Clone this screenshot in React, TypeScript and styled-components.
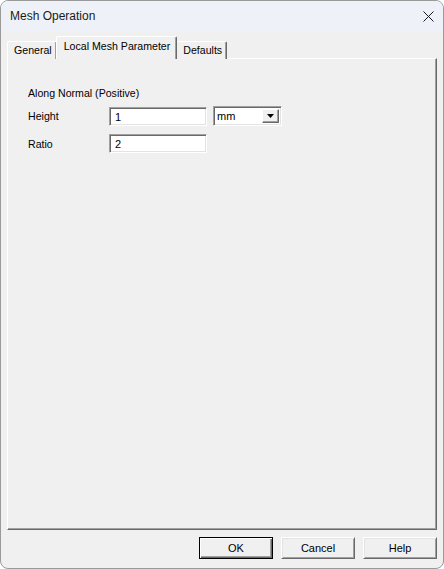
import React from "react";
import styled, { createGlobalStyle } from "styled-components";

const Global = createGlobalStyle`
  html, body { margin: 0; padding: 0; background: #ffffff; }
  * { box-sizing: border-box; }
`;

const Window = styled.div`
  width: 444px;
  height: 569px;
  border: 1px solid #9a9a9a;
  border-radius: 8px;
  overflow: hidden;
  display: flex;
  flex-direction: column;
  background: #f0f0f0;
  font-family: "Liberation Sans", Arial, sans-serif;
  color: #000;
`;

const TitleBar = styled.div`
  height: 30px;
  flex: none;
  display: flex;
  align-items: center;
  justify-content: space-between;
  padding-left: 9px;
  background: #eef2f8;
  font-size: 12px;
  color: #1a1a1a;
`;

const CloseBox = styled.div`
  width: 30px;
  height: 30px;
  display: flex;
  align-items: center;
  justify-content: center;
`;

const Body = styled.div`
  flex: 1;
  display: flex;
  flex-direction: column;
  padding: 6px 6px 8px 6px;
`;

const TabRow = styled.div`
  height: 22px;
  display: flex;
  align-items: flex-end;
  position: relative;
  z-index: 1;
  margin-bottom: -1px;
`;

const Tab = styled.div<{ $active?: boolean }>`
  height: ${(p) => (p.$active ? "23px" : "18px")};
  padding: ${(p) => (p.$active ? "3px 6px 0 7px" : "2px 4px 0 6px")};
  margin: ${(p) => (p.$active ? "0 -1px 0 -1px" : "0")};
  border-top: 1px solid #ffffff;
  border-left: 1px solid #ffffff;
  border-right: 1px solid #696969;
  box-shadow: inset -1px 0 0 #a0a0a0;
  border-radius: 2px 2px 0 0;
  background: #f0f0f0;
  font-size: 10.6px;
  white-space: nowrap;
  position: relative;
  z-index: ${(p) => (p.$active ? 2 : 1)};
`;

const Panel = styled.div`
  height: 472px;
  border-top: 1px solid #ffffff;
  border-left: 1px solid #ffffff;
  border-right: 1px solid #696969;
  border-bottom: 1px solid #696969;
  box-shadow: inset -1px -1px 0 #a0a0a0;
  padding: 27px 20px 0 20px;
  font-size: 10.6px;
`;

const Heading = styled.div`
  height: 14px;
  line-height: 14px;
  margin-bottom: 6px;
`;

const FormGrid = styled.div`
  display: grid;
  grid-template-columns: 81px 98px 75px;
  column-gap: 0;
  row-gap: 8px;
  align-items: center;
`;

const Label = styled.div`
  line-height: 14px;
`;

const Field = styled.div`
  height: 19px;
  background: #ffffff;
  border-top: 1px solid #a0a0a0;
  border-left: 1px solid #a0a0a0;
  border-right: 1px solid #ffffff;
  border-bottom: 1px solid #ffffff;
  box-shadow: inset 1px 1px 0 #696969, inset -1px -1px 0 #e3e3e3;
  padding: 2px 0 0 5px;
  line-height: 14px;
  font-size: 11px;
`;

const Select = styled(Field)`
  height: 20px;
  margin-left: 6px;
  display: flex;
  align-items: stretch;
  padding: 2px 2px 2px 3px;
`;

const SelectText = styled.div`
  flex: 1;
  line-height: 14px;
`;

const DropBtn = styled.div`
  width: 17px;
  background: #f0f0f0;
  border-top: 1px solid #ffffff;
  border-left: 1px solid #ffffff;
  border-right: 1px solid #696969;
  border-bottom: 1px solid #696969;
  box-shadow: inset -1px -1px 0 #a0a0a0;
  display: flex;
  align-items: center;
  justify-content: center;
`;

const ButtonRow = styled.div`
  display: flex;
  justify-content: flex-end;
  gap: 8px;
  margin-top: 7px;
`;

const Button = styled.div<{ $default?: boolean }>`
  width: 74px;
  height: 22px;
  display: flex;
  align-items: center;
  justify-content: center;
  background: #f0f0f0;
  font-size: 11px;
  border-top: 1px solid ${(p) => (p.$default ? "#000" : "#ffffff")};
  border-left: 1px solid ${(p) => (p.$default ? "#000" : "#ffffff")};
  border-right: 1px solid ${(p) => (p.$default ? "#000" : "#696969")};
  border-bottom: 1px solid ${(p) => (p.$default ? "#000" : "#696969")};
  box-shadow: ${(p) =>
    p.$default
      ? "inset 1px 1px 0 #ffffff, inset -1px -1px 0 #696969, inset -2px -2px 0 #a0a0a0"
      : "inset 1px 1px 0 #e3e3e3, inset -1px -1px 0 #a0a0a0"};
`;

export default function App() {
  return (
    <>
      <Global />
      <Window>
        <TitleBar>
          <span>Mesh Operation</span>
          <CloseBox>
            <svg width="11" height="11" viewBox="0 0 11 11">
              <path d="M0.5 0.5 L10.5 10.5 M10.5 0.5 L0.5 10.5" stroke="#1a1a1a" strokeWidth="1" fill="none" />
            </svg>
          </CloseBox>
        </TitleBar>
        <Body>
          <TabRow>
            <Tab>General</Tab>
            <Tab $active>Local Mesh Parameter</Tab>
            <Tab>Defaults</Tab>
          </TabRow>
          <Panel>
            <Heading>Along Normal (Positive)</Heading>
            <FormGrid>
              <Label>Height</Label>
              <Field>1</Field>
              <Select>
                <SelectText>mm</SelectText>
                <DropBtn>
                  <svg width="7" height="4" viewBox="0 0 7 4">
                    <path d="M0 0 H7 L3.5 4 Z" fill="#000" />
                  </svg>
                </DropBtn>
              </Select>
              <Label>Ratio</Label>
              <Field>2</Field>
              <div />
            </FormGrid>
          </Panel>
          <ButtonRow>
            <Button $default>OK</Button>
            <Button>Cancel</Button>
            <Button>Help</Button>
          </ButtonRow>
        </Body>
      </Window>
    </>
  );
}
